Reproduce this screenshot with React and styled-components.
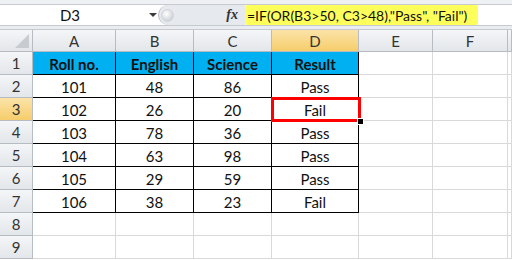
import React from "react";
import styled, { createGlobalStyle } from "styled-components";

const Global = createGlobalStyle`
  html, body { margin: 0; padding: 0; background: #fff; }
  body { width: 512px; height: 260px; overflow: hidden; font-family: Lato, "Open Sans", sans-serif; }
`;

const Page = styled.div`
  width: 512px;
  height: 260px;
  display: flex;
  flex-direction: column;
  background: #fff;
`;

const TopStrip = styled.div`
  height: 4px;
  background: #eef0f3;
  border-bottom: 1px solid #c6cacf;
`;

const FormulaBar = styled.div`
  height: 20px;
  display: flex;
  align-items: stretch;
  background: #fff;
  border-bottom: 1px solid #c6cacf;
`;

const NameBox = styled.div`
  width: 158px;
  display: flex;
  align-items: center;
  font-size: 15px;
  color: #111;
`;

const NameText = styled.span`
  width: 140px;
  text-align: center;
`;

const Arrow = styled.span`
  width: 0;
  height: 0;
  border-left: 4px solid transparent;
  border-right: 4px solid transparent;
  border-top: 4px solid #3a3a3a;
  margin-left: 9px;
`;

const Splitter = styled.div`
  width: 87px;
  display: flex;
  align-items: center;
  background: #e6e9ed;
  border-radius: 10px 0 0 10px;
  border-left: 1px solid #b9bec5;
  padding-left: 2px;
  box-sizing: border-box;
`;

const Grip = styled.span`
  width: 11px;
  height: 11px;
  border-radius: 50%;
  background: radial-gradient(circle at 40% 35%, #fff 0%, #d6dae0 60%, #c4c9cf 100%);
  border: 1px solid #d0d4da;
`;

const Fx = styled.span`
  margin-left: auto;
  margin-right: 7px;
  font-family: "Liberation Serif", serif;
  font-style: italic;
  font-weight: bold;
  font-size: 14px;
  color: #333;
`;

const Formula = styled.div`
  width: 233px;
  background: #ffff5c;
  border-radius: 2px;
  display: flex;
  align-items: center;
  padding-left: 2px;
  box-sizing: border-box;
  font-size: 14px;
  color: #111;
  white-space: nowrap;
`;

const Gap = styled.div`
  height: 3px;
  background: #e9ecf0;
  border-bottom: 1px solid #c6cacf;
`;

const Sheet = styled.div`
  flex: 1;
  display: grid;
  grid-template-columns: 33px 83px 78px 78px 87px 74px 75px 1fr;
  grid-template-rows: 22px repeat(9, 23px);
  position: relative;
  font-size: 15px;
`;

const Cell = styled.div`
  box-sizing: border-box;
  border-right: 1px solid ${(p) => (p.$boxed ? "#000" : "#d9d9d9")};
  border-bottom: 1px solid ${(p) => (p.$boxed ? "#000" : "#d9d9d9")};
  display: flex;
  align-items: center;
  justify-content: center;
  padding-top: 1px;
  background: ${(p) => (p.$head ? "#00b0f0" : "#fff")};
  font-weight: ${(p) => (p.$head ? 700 : 400)};
  color: #111;
`;

const HeadCell = styled.div`
  box-sizing: border-box;
  border-right: 1px solid #b7bcc3;
  border-bottom: 1px solid #b7bcc3;
  display: flex;
  align-items: center;
  justify-content: center;
  background: ${(p) =>
    p.$sel
      ? "linear-gradient(#fbe3a8, #f6cd6b)"
      : "linear-gradient(#f4f6f8, #e3e6ea)"};
  color: #333;
  font-size: 15px;
`;

const Corner = styled(HeadCell)`
  justify-content: flex-end;
  align-items: flex-end;
  padding: 0 3px 3px 0;
`;

const Triangle = styled.span`
  width: 0;
  height: 0;
  border-left: 14px solid transparent;
  border-bottom: 14px solid #c8ccd1;
`;

const Selection = styled.div`
  position: absolute;
  left: 271px;
  top: 67px;
  width: 90px;
  height: 25px;
  border: 3px solid #f00;
  box-sizing: border-box;
  pointer-events: none;
`;

const Handle = styled.div`
  position: absolute;
  left: 357px;
  top: 88px;
  width: 5px;
  height: 5px;
  background: #000;
  border: 1px solid #fff;
`;

const cols = ["A", "B", "C", "D", "E", "F", "G"];
const data = [
  ["Roll no.", "English", "Science", "Result"],
  ["101", "48", "86", "Pass"],
  ["102", "26", "20", "Fail"],
  ["103", "78", "36", "Pass"],
  ["104", "63", "98", "Pass"],
  ["105", "29", "59", "Pass"],
  ["106", "38", "23", "Fail"],
];

export default function App() {
  const rows = [];
  for (let r = 1; r <= 9; r++) {
    rows.push(
      <HeadCell key={`h${r}`} $sel={r === 3}>
        {r}
      </HeadCell>
    );
    for (let c = 0; c < 7; c++) {
      const inTable = r <= 7 && c < 4;
      rows.push(
        <Cell key={`${r}-${c}`} $boxed={inTable} $head={r === 1 && c < 4}>
          {inTable ? data[r - 1][c] : ""}
        </Cell>
      );
    }
  }
  return (
    <Page>
      <Global />
      <TopStrip />
      <FormulaBar>
        <NameBox>
          <NameText>D3</NameText>
          <Arrow />
        </NameBox>
        <Splitter>
          <Grip />
          <Fx>fx</Fx>
        </Splitter>
        <Formula>=IF(OR(B3&gt;50, C3&gt;48),"Pass", "Fail")</Formula>
      </FormulaBar>
      <Gap />
      <Sheet>
        <Corner>
          <Triangle />
        </Corner>
        {cols.map((c) => (
          <HeadCell key={c} $sel={c === "D"}>
            {c === "G" ? "" : c}
          </HeadCell>
        ))}
        {rows}
        <Selection />
        <Handle />
      </Sheet>
    </Page>
  );
}
